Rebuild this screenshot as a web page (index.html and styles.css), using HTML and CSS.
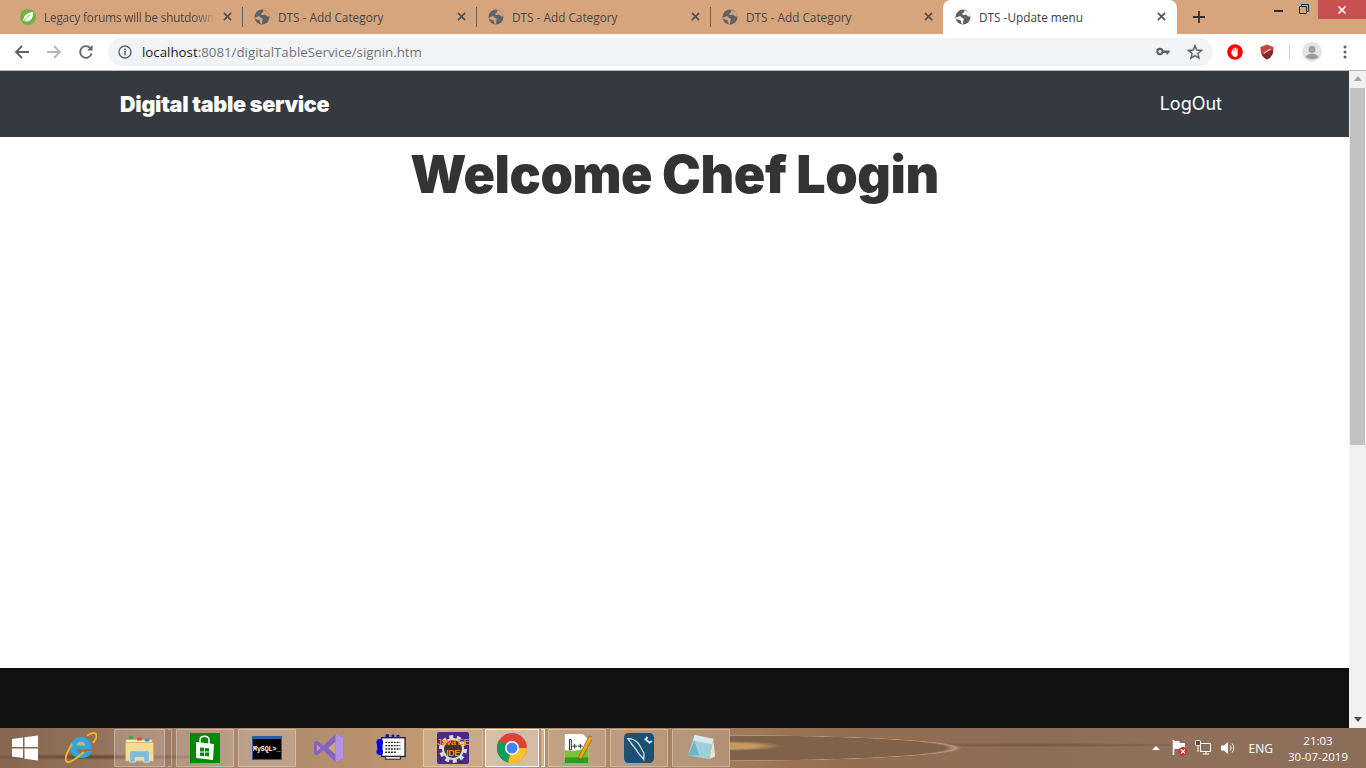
FILE: index.html
```html
<!DOCTYPE html>
<html lang="en">
<head>
<meta charset="utf-8">
<title>DTS -Update menu</title>
<link rel="stylesheet" href="styles.css">
</head>
<body>
<svg class="defs" width="0" height="0" aria-hidden="true">
  <defs>
    <symbol id="globe" viewBox="0 0 16 16">
      <circle cx="8" cy="8" r="7.500" fill="#5f6368"/>
      <path d="M1 8.800 5 7l2 2 1.800.6L7.800 15l-1.200-.2-1-3.500L1.200 10z" fill="#d6a57d"/>
      <path d="M9.500.9 9 3.200 6.800 5l1.700 1 2.500-.5 2.300 2h2.100L14 3.300z" fill="#d6a57d"/>
    </symbol>
    <symbol id="globew" viewBox="0 0 16 16">
      <circle cx="8" cy="8" r="7.500" fill="#5f6368"/>
      <path d="M1 8.800 5 7l2 2 1.800.6L7.800 15l-1.200-.2-1-3.500L1.200 10z" fill="#fff"/>
      <path d="M9.500.9 9 3.200 6.800 5l1.700 1 2.500-.5 2.300 2h2.100L14 3.300z" fill="#fff"/>
    </symbol>
    <symbol id="x" viewBox="0 0 10 10">
      <path d="M1 1l8 8M9 1l-8 8" stroke="#4a4d51" stroke-width="1.700" fill="none"/>
    </symbol>
  </defs>
</svg>

<header class="tabstrip">
  <div class="tab">
    <svg class="fav" viewBox="0 0 16 16"><circle cx="8" cy="8" r="8" fill="#6db33f"/><path d="M3.500 12C3 7 7 3.500 13 3c.5 5-2 9.500-6.500 9.500-1 0-2-.2-3-.5z" fill="#fff"/><path d="M4 12.500C5.500 9.500 7.500 7.500 10 6" stroke="#6db33f" stroke-width="1" fill="none"/></svg>
    <span class="tab-title fade">Legacy forums will be shutdown</span>
    <svg class="close"><use href="#x"/></svg>
  </div>
  <div class="tab">
    <svg class="fav"><use href="#globe"/></svg>
    <span class="tab-title">DTS - Add Category</span>
    <svg class="close"><use href="#x"/></svg>
  </div>
  <div class="tab">
    <svg class="fav"><use href="#globe"/></svg>
    <span class="tab-title">DTS - Add Category</span>
    <svg class="close"><use href="#x"/></svg>
  </div>
  <div class="tab tab-last">
    <svg class="fav"><use href="#globe"/></svg>
    <span class="tab-title">DTS - Add Category</span>
    <svg class="close"><use href="#x"/></svg>
  </div>
  <div class="tab tab-active">
    <svg class="fav"><use href="#globew"/></svg>
    <span class="tab-title">DTS -Update menu</span>
    <svg class="close"><use href="#x"/></svg>
  </div>
  <svg class="newtab" viewBox="0 0 12 12"><path d="M6 0v12M0 6h12" stroke="#2f3133" stroke-width="1.800" fill="none"/></svg>
  <div class="winctl">
    <svg class="min" viewBox="0 0 9 2"><rect width="9" height="2" fill="#2b2b2b"/></svg>
    <svg class="max" viewBox="0 0 10 10"><path d="M2.500 2.500V.5h7v7h-2M.5 2.500h7v7h-7z" fill="none" stroke="#2b2b2b"/></svg>
    <div class="winclose"><svg viewBox="0 0 10 10"><path d="M1.500 1.500l7 7M8.500 1.500l-7 7" stroke="#fff" stroke-width="1.600" fill="none"/></svg></div>
  </div>
</header>

<div class="toolbar">
  <svg class="tool" viewBox="0 0 16 16"><path d="M15 8H2M8 2 2 8l6 6" fill="none" stroke="#5f6368" stroke-width="1.800"/></svg>
  <svg class="tool" viewBox="0 0 16 16"><path d="M1 8h13M8 2l6 6-6 6" fill="none" stroke="#b4b6b9" stroke-width="1.800"/></svg>
  <svg class="tool" viewBox="0 0 16 16"><path d="M13.600 9.500A5.800 5.800 0 1 1 12.200 4" fill="none" stroke="#5f6368" stroke-width="1.800"/><path d="M14.500 1v5.500H9z" fill="#5f6368"/></svg>
  <div class="omnibox">
    <svg class="info" viewBox="0 0 14 14"><circle cx="7" cy="7" r="6" fill="none" stroke="#5f6368" stroke-width="1.400"/><rect x="6.300" y="6" width="1.500" height="4.300" fill="#5f6368"/><rect x="6.300" y="3.500" width="1.500" height="1.500" fill="#5f6368"/></svg>
    <span class="url"><span class="url-host">localhost</span>:8081/digitalTableService/signin.htm</span>
    <svg class="key" viewBox="0 0 16 10"><circle cx="4.500" cy="5" r="3" fill="none" stroke="#5f6368" stroke-width="2.400"/><path d="M8 3.800h7.500v3h-1.500v1.500h-2V6.800H8z" fill="#5f6368"/></svg>
    <svg class="star" viewBox="0 0 16 16"><path d="M8 1.800l1.800 4.300 4.700.4-3.600 3 1.100 4.600L8 11.700l-4 2.400 1.100-4.600-3.600-3 4.700-.4z" fill="none" stroke="#5f6368" stroke-width="1.500"/></svg>
  </div>
  <svg class="ext ext-abp" viewBox="0 0 16 16"><circle cx="8" cy="8" r="7.800" fill="#f00"/><path d="M4.800 8.500V5.500h1.100V7.500h.4V4h1.200v3.500h.4V3.600h1.200v3.900h.4V4.600h1.200v6c0 1.400-1 2.300-2.300 2.300H7.800c-1 0-1.600-.5-2-1.200L3.800 8.800 4.500 8z" fill="#fff"/></svg>
  <svg class="ext ext-shield" viewBox="0 0 14 16"><path d="M7 .5 13.500 3c0 6-1 10-6.500 12.500C1.500 13 .5 9 .5 3z" fill="#c9453f"/><path d="M13.300 6C13 10 11.500 13.200 7 15.500 4 14 2.500 12 1.500 9.500z" fill="#7e2a30"/><path d="M3.500 9.500 10.500 5" stroke="#f1c7b8" stroke-width="1.200" fill="none"/></svg>
  <div class="sep"></div>
  <svg class="avatar" viewBox="0 0 20 20"><circle cx="10" cy="10" r="10" fill="#e1e3e5"/><circle cx="10" cy="7.500" r="3.400" fill="#9a9d9f"/><path d="M3.500 15c1-2.500 4-3.300 6.500-3.300s5.500.8 6.500 3.300c-1.500 1.500-4 2.200-6.500 2.200S5 16.500 3.500 15z" fill="#9a9d9f"/></svg>
  <svg class="menu" viewBox="0 0 4 14"><circle cx="2" cy="2" r="1.500" fill="#5f6368"/><circle cx="2" cy="7" r="1.500" fill="#5f6368"/><circle cx="2" cy="12" r="1.500" fill="#5f6368"/></svg>
</div>

<div class="viewport">
  <div class="page">
    <nav class="nav">
      <a class="brand">Digital table service</a>
      <a class="logout">LogOut</a>
    </nav>
    <main class="main">
      <h1 class="heading">Welcome Chef Login</h1>
    </main>
    <footer class="footer"></footer>
  </div>
  <div class="scrollbar">
    <div class="arrow arrow-up"></div>
    <div class="thumb"></div>
    <div class="track"></div>
    <div class="arrow arrow-down"></div>
  </div>
</div>

<div class="taskbar">
  <svg class="start" viewBox="0 0 26 26"><path d="M0 4l11-1.500V12H0zM12.500 2.300 26 .5V12H12.500zM0 13.500h11V23L0 21.500zM12.500 13.500H26v12l-13.500-1.800z" fill="#fff"/></svg>
  <svg class="ie" viewBox="0 0 32 32"><path d="M5 16a11 11 0 0 1 21-4.500c.7 1.500 1 3.300 1 5.500H11.500c.3 3 2.300 4.500 5 4.500 2 0 3.500-.8 4.500-2.500h6c-1.500 4.500-5.500 7-10.500 7C9.500 26 5 21.500 5 16z" fill="#2ea8e5"/><path d="M11.500 13.500c.4-2.500 2.200-3.800 4.500-3.800s4.100 1.300 4.500 3.800z" fill="#d5ae6c"/><path d="M7 12C2 20-.5 27 1.500 29.500 4 32 11 27 19 20M22 3.500c4-2.500 7.500-3 9-1.500 1.500 1.800 0 5.500-3 9" fill="none" stroke="#f0b429" stroke-width="2"/></svg>

  <div class="tb tb-explorer">
    <svg viewBox="0 0 32 32"><path d="M1 7h28v6H1z" fill="#fbeec0" stroke="#c9a85c" stroke-width=".8"/><rect x="4" y="3.500" width="5" height="3" fill="#2fae4c"/><rect x="13" y="5" width="5" height="3" fill="#d84a3a"/><rect x="21" y="6" width="5" height="3" fill="#3a8fd8"/><path d="M.5 10h30v20H.5z" fill="#f5dc8e" stroke="#c9a85c" stroke-width=".8"/><path d="M5 31V21c0-1 1-2 2-2h17c1 0 2 1 2 2v10h-6v-5h-9v5z" fill="#7fbcdc" stroke="#cfeaf7" stroke-width=".8"/></svg>
  </div>
  <div class="tb-edge"></div>
  <div class="tb tb-store">
    <svg viewBox="0 0 30 30"><rect width="30" height="30" fill="#008a00"/><path d="M6 9l18 2-1 16-17-2z" fill="#fff"/><path d="M10 10V7c0-5 9-5 9 0v4" fill="none" stroke="#fff" stroke-width="1.500"/><path d="M10 14.500l4 .3v3.700h-4zM15 15l4 .3v3.200h-4zM10 19.500h4v3.700l-4-.4zM15 19.500h4v4l-4-.4z" fill="#008a00"/></svg>
  </div>
  <div class="tb tb-mysql">
    <div class="console"><span class="console-text">MySQL&gt;_</span></div>
  </div>
  <div class="tb tb-plain">
    <svg viewBox="0 0 32 32"><path d="M23 1 31 4.500v23L23 31 10 18.500 3 24 0 22.500v-13L3 8l7 5.500z" fill="#8661c5"/><path d="M23 1 31 4.500v23L23 31z" fill="#b491e8"/><path d="M23 9l-8 7 8 7zM3 12.500v7L7 16z" fill="#c7a877"/></svg>
  </div>
  <div class="tb tb-plain tb-dev">
    <svg viewBox="0 0 32 32"><rect x="6" y="5" width="25" height="20" fill="#fff" stroke="#222" stroke-width="1.500"/><rect x="10" y="25" width="16" height="3" fill="#ddd" stroke="#222"/><path d="M10 10h16M10 13.500h16M10 17h16M10 20.500h12" stroke="#222" stroke-width="1.500" stroke-dasharray="2 1"/><circle cx="4" cy="10" r="3.500" fill="#00f"/><circle cx="4" cy="20" r="3.500" fill="#00f"/><circle cx="4" cy="15" r="3" fill="#00f"/><circle cx="12" cy="3" r="2" fill="#00f"/><circle cx="18" cy="3" r="1.500" fill="#00f"/><rect x="22" y="2" width="3" height="2" fill="#00f"/></svg>
  </div>
  <div class="tb tb-java">
    <svg viewBox="0 0 32 32"><rect width="32" height="32" rx="2" fill="#4a2b80"/><circle cx="16" cy="17" r="12" fill="none" stroke="#d9d9d9" stroke-width="4" stroke-dasharray="4 3.500"/><circle cx="16" cy="17" r="10" fill="#3a3440" stroke="#d9d9d9" stroke-width="2"/></svg>
    <span class="java-text">Java EE<br>IDE</span>
  </div>
  <div class="tb tb-chrome">
    <svg viewBox="0 0 30 30"><circle cx="15" cy="15" r="15" fill="#db4437"/><path d="M15 15 2 7.500A15 15 0 0 0 11 29.500z" fill="#0f9d58"/><path d="M15 15h15A15 15 0 0 1 11 29.500z" fill="#fbc02d"/><circle cx="15" cy="15" r="7" fill="#fff"/><circle cx="15" cy="15" r="5.500" fill="#4285f4"/></svg>
  </div>
  <div class="tb-edge tb-edge-bright"></div>
  <div class="tb tb-npp">
    <svg viewBox="0 0 32 32"><path d="M3 1h19l6 6v25H3z" fill="#fff"/><path d="M3 18c8 2 17 0 25-2v16H3z" fill="#7cc034"/><path d="M3 26h25v6H3z" fill="#2f9a1c"/><path d="M8 18V7h2v11zM11 14h5M13.500 11.500v5M17 14h5M19.500 11.500v5" stroke="#222" fill="none"/><path d="M29 3 33 5 21 27l-3 1 0-3z" fill="#f3a81d" stroke="#7a4c0a" stroke-width=".7"/></svg>
  </div>
  <div class="tb tb-wb">
    <svg viewBox="0 0 32 32"><rect width="32" height="32" rx="5" fill="#1c5074"/><path d="M4 6c5 0 9 2 12 6 2 3 3 6 5 9 1 2 0 4 0 7-2-3-4-4-6-7-2-4-6-8-8-11z" fill="none" stroke="#d6e3ea" stroke-width="1.400"/><path d="M22 6l6 5M25 4l-2 4M30 9l-4 1" stroke="#d6e3ea" stroke-width="2" fill="none"/></svg>
  </div>
  <div class="tb tb-note">
    <svg viewBox="0 0 32 32"><path d="M9 2 29 6 25 28 2 24z" fill="#9ed0da"/><path d="M9 2 29 6 28 12 8 8z" fill="#d9e9ee"/><path d="M25 28 29 6l2 19z" fill="#e8e3cf"/><path d="M2 24 9 8 14 24z" fill="#6fb3c5"/></svg>
  </div>
  <div class="tray">
    <svg class="tray-up" viewBox="0 0 8 4"><path d="M0 4 4 0l4 4z" fill="#fff"/></svg>
    <svg class="tray-flag" viewBox="0 0 16 16"><path d="M1.500 0v15" stroke="#fff" stroke-width="1.500"/><path d="M2 1h5l1 2h5v6H2z" fill="#fff"/><circle cx="11" cy="11.500" r="4.500" fill="#e02b2b"/><path d="M9 9.500l4 4M13 9.500l-4 4" stroke="#fff" stroke-width="1.200"/></svg>
    <svg class="tray-net" viewBox="0 0 16 16"><rect x="5.500" y="3.500" width="10" height="8" fill="none" stroke="#fff"/><path d="M8 14h6M11 12v2" stroke="#fff"/><rect x=".5" y=".5" width="5" height="5" rx="1" fill="#5d4a3a" stroke="#fff"/><path d="M3 6v6" stroke="#fff"/></svg>
    <svg class="tray-vol" viewBox="0 0 16 16"><path d="M1 5.500h3L8 2v12L4 10.500H1z" fill="#fff"/><path d="M10 5.500a3.500 3.500 0 0 1 0 5M12 3.500a6.500 6.500 0 0 1 0 9" fill="none" stroke="#fff"/></svg>
    <span class="tray-lang">ENG</span>
    <div class="clock"><span>21:03</span><span>30-07-2019</span></div>
  </div>
</div>
</body>
</html>
```
FILE: styles.css
```css
* { box-sizing: border-box; }
html, body { margin: 0; height: 768px; overflow: hidden; }
body { display: flex; flex-direction: column; width: 1366px; background: #fff; font-family: "Open Sans", "Liberation Sans", sans-serif; }
.defs { position: absolute; }

/* tab strip */
.tabstrip { height: 34px; flex: none; background: #d6a57d; display: flex; padding-left: 8px; align-items: stretch; }
.tab { width: 234px; display: flex; align-items: center; padding: 0 10px 1px 12px; position: relative; color: #454545; }
.tab::after { content: ""; position: absolute; right: -1px; top: 7px; width: 1px; height: 20px; background: #6f5e50; }
.tab-last { width: 233px; }
.tab-last::after, .tab-active::after { display: none; }
.tab-active { background: #fff; border-radius: 8px 8px 0 0; color: #3c4043; width: 234px; padding-right: 11px; }
.tab .fav { width: 16px; height: 16px; flex: none; }
.tab-title { font-size: 11.800px; margin-left: 8px; flex: 1; white-space: nowrap; overflow: hidden; min-width: 0; }
.fade { letter-spacing: -.2px; -webkit-mask-image: linear-gradient(90deg, #000 88%, transparent 100%); mask-image: linear-gradient(90deg, #000 88%, transparent 100%); }
.close { width: 9px; height: 9px; flex: none; margin-left: 8px; }
.newtab { width: 12px; height: 12px; margin: 11px 0 0 16px; flex: none; }
.winctl { margin-left: auto; display: flex; align-items: flex-start; }
.min { width: 9px; height: 2px; margin: 10px 16px 0 0; }
.max { width: 10px; height: 10px; margin: 4px 9px 0 0; }
.winclose { width: 48px; height: 19px; background: #c75050; display: flex; align-items: center; justify-content: center; }
.winclose svg { width: 10px; height: 10px; }

/* toolbar */
.toolbar { height: 37px; flex: none; background: #fff; border-bottom: 1px solid #b9b9b9; display: flex; align-items: center; padding: 0 0 1px 14px; }
.tool { width: 16px; height: 16px; margin-right: 16px; flex: none; }
.omnibox { width: 1105px; height: 28px; margin-left: -2px; border-radius: 14px; background: #f1f3f4; display: flex; align-items: center; padding: 0 10px; flex: none; }
.info { width: 14px; height: 14px; flex: none; }
.url { margin-left: 10px; font-size: 13.300px; color: #70757a; white-space: nowrap; }
.url-host { color: #202124; }
.key { width: 14px; height: 9px; margin-left: auto; }
.star { width: 16px; height: 16px; margin-left: 17px; }
.ext { flex: none; height: 16px; }
.ext-abp { width: 16px; margin-left: 14px; }
.ext-shield { width: 14px; margin-left: 17px; }
.sep { width: 1px; height: 16px; background: #d0d0d0; margin-left: 15px; flex: none; }
.avatar { width: 20px; height: 20px; margin-left: 12px; flex: none; }
.menu { width: 4px; height: 14px; margin-left: 21px; flex: none; }

/* page */
.viewport { height: 657px; flex: none; display: flex; }
.page { width: 1349px; display: flex; flex-direction: column; }
.nav { height: 66px; background: #343a40; flex: none; display: flex; align-items: center; justify-content: space-between; padding: 0 127px 0 120px; color: #fff; }
.brand { font-family: "Inter", sans-serif; font-weight: 900; font-size: 21.600px; letter-spacing: -.3px; }
.logout { font-family: "Inter", sans-serif; font-size: 18px; font-weight: 400; padding-bottom: 1px; }
.main { flex: 1; text-align: center; }
.heading { margin: 0; font-family: "Inter", sans-serif; font-weight: 900; font-size: 52px; line-height: 76px; color: #333; letter-spacing: -.45px; }
.footer { height: 60px; flex: none; background: #111; }

.scrollbar { width: 17px; background: #f1f1f1; display: flex; flex-direction: column; align-items: center; }
.arrow { height: 17px; width: 17px; flex: none; position: relative; }
.arrow::after { content: ""; position: absolute; left: 4.500px; border-left: 4px solid transparent; border-right: 4px solid transparent; }
.arrow-up::after { top: 5px; border-bottom: 5px solid #a3a3a3; }
.arrow-down::after { top: 6px; border-top: 5px solid #505050; }
.thumb { width: 15px; height: 357px; background: #c1c1c1; flex: none; }
.track { flex: 1; }

/* taskbar */
.taskbar { height: 40px; flex: none; display: flex; align-items: center;
  background:
    radial-gradient(ellipse 52px 5px at 0 18px, #c49c60 0, #c49c60 50%, transparent 100%) 730px 0 / 60px 40px no-repeat,
    radial-gradient(ellipse 232px 13px at 0 20px, #80614a 0, #80614a 93%, #b3967e 97%, transparent 100%) 730px 0 / 240px 40px no-repeat,
    radial-gradient(ellipse 130px 3px at 90px 29px, #5f4636 0, transparent 100%),
    radial-gradient(ellipse 190px 2px at 1040px 17px, #6f5440 0, transparent 100%),
    linear-gradient(90deg, #85674f 0, #96745c 8%, #ad8a70 18%, #b48f6e 25%, #c39b70 32%, #b8916c 38%, #a98360 48%, #9c7655 56%, #926d50 62%, #8e6d55 75%, #8f705a 85%, #8b6e5a 100%);
}
.start { width: 26px; height: 26px; margin-left: 12px; flex: none; }
.ie { width: 32px; height: 32px; margin-left: 27px; flex: none; }
.tb { height: 38px; width: 58px; flex: none; margin-right: 4px; display: flex; align-items: center; justify-content: center; border: 1px solid rgba(255,255,255,.3); background: rgba(255,255,255,.18); position: relative; }
.tb svg { width: 30px; height: 30px; }
.tb-plain { border-color: transparent; background: transparent; }
.tb-dev { margin-right: 3px; }
.tb-explorer { width: 51px; margin-left: 17px; margin-right: 3px; }
.tb-edge { width: 4px; height: 38px; border: 1px solid rgba(255,255,255,.3); border-left: 0; margin-right: 4px; flex: none; }
.tb-edge-bright { border-color: rgba(255,255,255,.8); background: rgba(255,255,255,.3); margin-right: 3px; }
.tb-java { width: 60px; margin-right: 2px; }
.tb-java svg { width: 32px; height: 32px; }
.java-text { position: absolute; font-size: 9px; font-weight: 700; line-height: 11px; letter-spacing: -.3px; text-align: center; color: #ff8a00; font-family: "Liberation Sans", sans-serif; }
.tb-chrome { width: 54px; margin-right: 2px; border: 1px solid rgba(255,255,255,.85); background: rgba(255,255,255,.4); }
.console { width: 30px; height: 24px; background: #000; border: 1px solid #2a5f9e; border-top-width: 3px; color: #fff; font-family: "Liberation Mono", monospace; font-size: 6.500px; font-weight: 700; display: flex; align-items: center; overflow: hidden; }
.console-text { white-space: nowrap; }
.tray { margin-left: auto; display: flex; align-items: center; color: #fff; padding-right: 18px; }
.tray-up { width: 8px; height: 4px; margin-right: 12px; }
.tray-flag { width: 16px; height: 16px; margin-right: 7px; }
.tray-net { width: 16px; height: 16px; margin-right: 9px; }
.tray-vol { width: 16px; height: 16px; margin-right: 13px; }
.tray-lang { font-size: 12px; margin-right: 15px; }
.clock { display: flex; flex-direction: column; align-items: center; font-size: 11.500px; line-height: 16px; padding-top: 2px; }
```
